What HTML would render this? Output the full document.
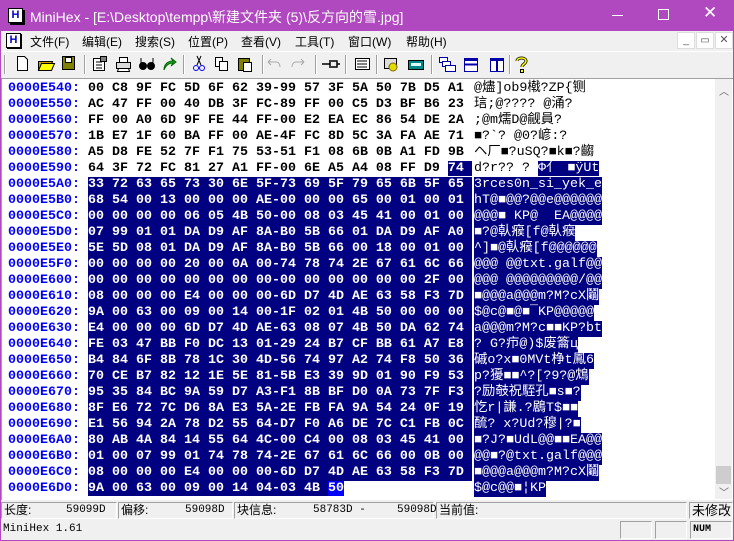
<!DOCTYPE html>
<html><head><meta charset="utf-8"><style>
*{margin:0;padding:0;box-sizing:border-box}
body{width:734px;height:541px;overflow:hidden;background:#f0f0f0;position:relative;font-family:"Liberation Sans","Noto Sans CJK SC",sans-serif;font-size:12px}
.a{position:absolute}
#title{left:0;top:0;width:734px;height:31px;background:#b048bf;color:#fff;font-size:14px}
#frame{left:0;top:0;width:734px;height:541px;border:1px solid #b048bf;border-top:none;pointer-events:none}
.menu span{position:absolute;top:33px;font-size:12px;color:#000}
#main{left:1px;top:78px;width:732px;height:422px;background:#fff;border-top:1px solid #a0a0a0;border-left:1px solid #a0a0a0}
.r{position:absolute;left:8px;height:16px;line-height:16px;font-family:"Liberation Mono","Noto Sans CJK SC",monospace;font-weight:bold;font-size:13.33px;white-space:pre;color:#000}
.r b{color:#0000ff}
.h{position:absolute;left:80px}
.c{position:absolute;left:466px;font-weight:normal;letter-spacing:0}
.s{background:#000080;color:#fff}
.k{background:#0000ff;color:#fff}
.cell{position:absolute;top:502px;height:17px;border:1px solid;border-color:#a0a0a0 #fff #fff #a0a0a0;font-size:12px;line-height:15px;padding-left:2px}
.cell2{position:absolute;top:521px;height:18px;border:1px solid;border-color:#a0a0a0 #fff #fff #a0a0a0}
.sep{position:absolute;top:55px;width:2px;height:19px;border-left:1px solid #a0a0a0;border-right:1px solid #fff}
</style></head><body>
<div id="title" class="a">
 <div class="a" style="left:8px;top:8px;width:15px;height:15px;background:#fff;border:1px solid #000;box-shadow:2px 2px 0 #000"><div style="font:bold 11px 'Liberation Sans';color:#0000c0;text-align:center;line-height:13px">H</div></div>
 <div class="a" style="left:30px;top:7px">MiniHex - [E:\Desktop\tempp\新建文件夹 (5)\反方向的雪.jpg]</div>
 <div class="a" style="left:612px;top:15px;width:11px;height:1px;background:#fff"></div>
 <div class="a" style="left:658px;top:9px;width:11px;height:11px;border:1px solid #fff"></div>
 <div class="a" style="left:703px;top:3px;font-size:17px">✕</div>
</div>
<div class="menu">
 <div class="a" style="left:6px;top:33px;width:15px;height:15px;background:#fff;border:1px solid #000;box-shadow:1px 1px 0 #000;font:bold 11px 'Liberation Sans';color:#0000c0;text-align:center;line-height:13px">H</div>
 <span style="left:30px">文件(F)</span><span style="left:82px">编辑(E)</span><span style="left:135px">搜索(S)</span><span style="left:188px">位置(P)</span><span style="left:241px">查看(V)</span><span style="left:295px">工具(T)</span><span style="left:348px">窗口(W)</span><span style="left:406px">帮助(H)</span>
 <div class="a" style="left:677px;top:32px;width:18px;height:17px;background:#fff;border:1px solid #ddd;font-size:10px;text-align:center;line-height:15px;color:#555">_</div>
 <div class="a" style="left:696px;top:32px;width:18px;height:17px;background:#fff;border:1px solid #ddd;font-size:10px;text-align:center;line-height:15px;color:#555">▭</div>
 <div class="a" style="left:715px;top:32px;width:18px;height:17px;background:#fff;border:1px solid #ddd;font-size:11px;text-align:center;line-height:15px;color:#555">✕</div>
</div>
<div class="a" style="left:1px;top:51px;width:732px;height:1px;background:#fff"></div>
<div class="sep" style="left:4px"></div>
<svg class="a" style="left:0;top:52px" width="734" height="26">
 <g stroke="#000" fill="none">
  <path d="M17.5 4.5h7l3 3v11h-10z" fill="#fff"/>
  <path d="M38.5 9.5h14l-3 9h-11z" fill="#c0a000"/><path d="M38.5 18.5l3-7h13l-3 7z" fill="#ff0" />
  <rect x="62.5" y="4.5" width="12" height="13" fill="#808000"/><rect x="65.5" y="5.5" width="6" height="5" fill="#fff"/>
  <rect x="93.5" y="6.5" width="11" height="12" fill="#fff"/><path d="M96 10h6M96 13h6M96 16h6"/><rect x="100.5" y="4.5" width="6" height="5" fill="#808080"/>
  <path d="M116.5 10.5h14v6h-14z" fill="#ddd"/><path d="M119.5 5.5h8v5h-8z" fill="#fff"/><path d="M118.5 16.5h10l1 3h-12z" fill="#fff"/>
  <circle cx="143" cy="14" r="3.5" fill="#000"/><circle cx="151" cy="14" r="3.5" fill="#000"/><path d="M141 6v6M153 6v6"/>
  <path d="M164 18c0-6 4-9 9-9l-2-3 5 4-5 4 2-3c-4 0-7 2-9 7z" fill="#2a2" stroke="#060"/>
  <circle cx="196" cy="16" r="2.5" stroke="#00f"/><circle cx="202" cy="16" r="2.5" stroke="#00f"/><path d="M197 13l4-9M201 13l-4-9"/>
  <rect x="215.5" y="5.5" width="7" height="9" fill="#fff"/><rect x="219.5" y="9.5" width="8" height="9" fill="#fff"/>
  <rect x="238.5" y="6.5" width="11" height="12" fill="#808000"/><rect x="243.5" y="10.5" width="8" height="9" fill="#fff"/>
  <path d="M268 10h8c3 0 4 3 4 5M268 10l3-3M268 10l3 3" stroke="#aaa"/>
  <path d="M304 10h-8c-3 0-4 3-4 5M304 10l-3-3M304 10l-3 3" stroke="#aaa"/>
  <path d="M322 12h8M330 8v8M331 9h6v6h-6M337 12h3" stroke-width="1.5"/>
  <rect x="355.5" y="6.5" width="14" height="11" fill="#fff"/><path d="M357 9h10M357 12h10M357 15h10"/>
  <rect x="384.5" y="6.5" width="12" height="10" fill="#ddd"/><circle cx="393" cy="15" r="4" fill="#dd0" stroke="#860"/>
  <rect x="408.5" y="8.5" width="15" height="9" fill="#088"/><rect x="411" y="11" width="10" height="3" fill="#dff" stroke="none"/>
  <rect x="439.5" y="5.5" width="8" height="5" fill="#fff" stroke="#00a"/><rect x="442.5" y="9.5" width="8" height="5" fill="#fff" stroke="#00a"/><rect x="445.5" y="13.5" width="10" height="6" fill="#fff" stroke="#00a"/>
  <rect x="464.5" y="6.5" width="13" height="13" fill="#fff" stroke="#00a" stroke-width="1"/><path d="M465 8h12M465 12.5h12" stroke="#00a" stroke-width="2"/>
  <rect x="490.5" y="6.5" width="13" height="13" fill="#fff" stroke="#00a"/><path d="M491 8h12M497 8v11" stroke="#00a" stroke-width="2"/>
  <path d="M517 9c0-4 9-4 9 0 0 3-4 3-4 6" stroke="#000" stroke-width="3"/><path d="M517 9c0-4 9-4 9 0 0 3-4 3-4 6" stroke="#ff0" stroke-width="1.5"/><rect x="520.5" y="17.5" width="3" height="3" fill="#ff0"/>
 </g>
</svg>
<div class="sep" style="left:84px"></div><div class="sep" style="left:183px"></div><div class="sep" style="left:262px"></div><div class="sep" style="left:315px"></div><div class="sep" style="left:345px"></div><div class="sep" style="left:376px"></div><div class="sep" style="left:431px"></div><div class="sep" style="left:509px"></div>
<div id="main" class="a"></div>
<div class="r" style="top:81px"><b>0000E540:</b><span class="h">00 C8 9F FC 5D 6F 62 39-99 57 3F 5A 50 7B D5 A1 </span><span class="c">@燼]ob9橶?ZP{铡</span></div>
<div class="r" style="top:97px"><b>0000E550:</b><span class="h">AC 47 FF 00 40 DB 3F FC-89 FF 00 C5 D3 BF B6 23 </span><span class="c">琂;@???? @涌?</span></div>
<div class="r" style="top:113px"><b>0000E560:</b><span class="h">FF 00 A0 6D 9F FE 44 FF-00 E2 EA EC 86 54 DE 2A </span><span class="c">;@m燸D@觎員?</span></div>
<div class="r" style="top:129px"><b>0000E570:</b><span class="h">1B E7 1F 60 BA FF 00 AE-4F FC 8D 5C 3A FA AE 71 </span><span class="c">■?`? @0?嵃:?</span></div>
<div class="r" style="top:145px"><b>0000E580:</b><span class="h">A5 D8 FE 52 7F F1 75 53-51 F1 08 6B 0B A1 FD 9B </span><span class="c">ヘ厂■?uSQ?■k■?齺</span></div>
<div class="r" style="top:161px"><b>0000E590:</b><span class="h">64 3F 72 FC 81 27 A1 FF-00 6E A5 A4 08 FF D9 <span class="s">74 </span></span><span class="c">d?r?? ? <span class="s">Φ亻 ■ÿUt</span></span></div>
<div class="r" style="top:177px"><b>0000E5A0:</b><span class="h s">33 72 63 65 73 30 6E 5F-73 69 5F 79 65 6B 5F 65 </span><span class="c s">3rces0n_si_yek_e</span></div>
<div class="r" style="top:193px"><b>0000E5B0:</b><span class="h s">68 54 00 13 00 00 00 AE-00 00 00 65 00 01 00 01 </span><span class="c s">hT@■@@?@@e@@@@@@</span></div>
<div class="r" style="top:209px"><b>0000E5C0:</b><span class="h s">00 00 00 00 06 05 4B 50-00 08 03 45 41 00 01 00 </span><span class="c s">@@@■ KP@  EA@@@@</span></div>
<div class="r" style="top:225px"><b>0000E5D0:</b><span class="h s">07 99 01 01 DA D9 AF 8A-B0 5B 66 01 DA D9 AF A0 </span><span class="c s">■?@倝瘊[f@倝瘊</span></div>
<div class="r" style="top:241px"><b>0000E5E0:</b><span class="h s">5E 5D 08 01 DA D9 AF 8A-B0 5B 66 00 18 00 01 00 </span><span class="c s">^]■@倝瘊[f@@@@@@</span></div>
<div class="r" style="top:257px"><b>0000E5F0:</b><span class="h s">00 00 00 00 20 00 0A 00-74 78 74 2E 67 61 6C 66 </span><span class="c s">@@@ @@txt.galf@@</span></div>
<div class="r" style="top:273px"><b>0000E600:</b><span class="h s">00 00 00 00 00 00 00 00-00 00 00 00 00 00 2F 00 </span><span class="c s">@@@ @@@@@@@@@/@@</span></div>
<div class="r" style="top:289px"><b>0000E610:</b><span class="h s">08 00 00 00 E4 00 00 00-6D D7 4D AE 63 58 F3 7D </span><span class="c s">■@@@a@@@m?M?cX鬮</span></div>
<div class="r" style="top:305px"><b>0000E620:</b><span class="h s">9A 00 63 00 09 00 14 00-1F 02 01 4B 50 00 00 00 </span><span class="c s">$@c@■@■¯KP@@@@@</span></div>
<div class="r" style="top:321px"><b>0000E630:</b><span class="h s">E4 00 00 00 6D D7 4D AE-63 08 07 4B 50 DA 62 74 </span><span class="c s">a@@@m?M?c■■KP?bt</span></div>
<div class="r" style="top:337px"><b>0000E640:</b><span class="h s">FE 03 47 BB F0 DC 13 01-29 24 B7 CF BB 61 A7 E8 </span><span class="c s">? G?疖@)$废籥ц</span></div>
<div class="r" style="top:353px"><b>0000E650:</b><span class="h s">B4 84 6F 8B 78 1C 30 4D-56 74 97 A2 74 F8 50 36 </span><span class="c s">磩o?x■0MVt棦t鳳6</span></div>
<div class="r" style="top:369px"><b>0000E660:</b><span class="h s">70 CE B7 82 12 1E 5E 81-5B E3 39 9D 01 90 F9 53 </span><span class="c s">p?獶■■^?[?9?@鴆</span></div>
<div class="r" style="top:385px"><b>0000E670:</b><span class="h s">95 35 84 BC 9A 59 D7 A3-F1 8B BF D0 0A 73 7F F3 </span><span class="c s">?励攲祝駤孔■s■?</span></div>
<div class="r" style="top:401px"><b>0000E680:</b><span class="h s">8F E6 72 7C D6 8A E3 5A-2E FB FA 9A 54 24 0F 19 </span><span class="c s">忔r|謙.?鶋T$■■</span></div>
<div class="r" style="top:417px"><b>0000E690:</b><span class="h s">E1 56 94 2A 78 D2 55 64-D7 F0 A6 DE 7C C1 FB 0C </span><span class="c s">酼? x?Ud?穆|?■</span></div>
<div class="r" style="top:433px"><b>0000E6A0:</b><span class="h s">80 AB 4A 84 14 55 64 4C-00 C4 00 08 03 45 41 00 </span><span class="c s">■?J?■UdL@@■■EA@@</span></div>
<div class="r" style="top:449px"><b>0000E6B0:</b><span class="h s">01 00 07 99 01 74 78 74-2E 67 61 6C 66 00 0B 00 </span><span class="c s">@@■?@txt.galf@@@</span></div>
<div class="r" style="top:465px"><b>0000E6C0:</b><span class="h s">08 00 00 00 E4 00 00 00-6D D7 4D AE 63 58 F3 7D </span><span class="c s">■@@@a@@@m?M?cX鬮</span></div>
<div class="r" style="top:481px"><b>0000E6D0:</b><span class="h"><span class="s">9A 00 63 00 09 00 14 04-03 4B </span><span class="k">50</span></span><span class="c s">$@c@@■¦KP</span></div>
<div class="a" style="left:715px;top:79px;width:17px;height:420px;background:#f0f0f0">
 <div class="a" style="left:4px;top:4px;font-size:10px;color:#606060">︿</div>
 <div class="a" style="left:1px;top:387px;width:15px;height:18px;background:#cdcdcd"></div>
 <div class="a" style="left:4px;top:405px;font-size:10px;color:#606060">﹀</div>
</div>
<div class="cell" style="left:1px;width:116px">长度:<span class="a" style="left:64px;font-family:'Liberation Mono';font-size:11px">59099D</span></div>
<div class="cell" style="left:118px;width:115px">偏移:<span class="a" style="left:66px;font-family:'Liberation Mono';font-size:11px">59098D</span></div>
<div class="cell" style="left:234px;width:200px">块信息:<span class="a" style="left:78px;font-family:'Liberation Mono';font-size:11px">58783D -</span><span class="a" style="left:162px;font-family:'Liberation Mono';font-size:11px">59098D</span></div>
<div class="cell" style="left:436px;width:251px">当前值:</div>
<div class="cell" style="left:689px;width:44px;font-size:13px">未修改</div>
<div class="a" style="left:3px;top:523px;font-family:'Liberation Mono';font-size:11px">MiniHex 1.61</div>
<div class="cell2" style="left:620px;width:32px"></div>
<div class="cell2" style="left:655px;width:32px"></div>
<div class="cell2" style="left:690px;width:42px;font-family:'Liberation Mono';font-size:10px;font-weight:bold;padding-left:2px;line-height:16px">NUM</div>
<div id="frame" class="a"></div>
</body></html>
